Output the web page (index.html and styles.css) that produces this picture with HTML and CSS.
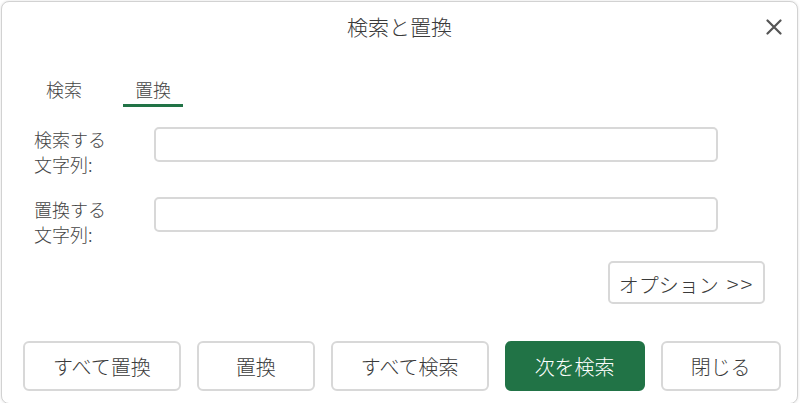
FILE: index.html
```html
<!DOCTYPE html>
<html lang="ja">
<head>
<meta charset="utf-8">
<title>検索と置換</title>
<link rel="stylesheet" href="styles.css">
</head>
<body>
<div class="dialog">
  <div class="header">
    <span class="spacer"></span>
    <h1 class="title">検索と置換</h1>
    <button class="close" aria-label="閉じる">
      <svg width="16" height="16" viewBox="0 0 16 16"><path d="M1.5 1.5 L14.5 14.5 M14.5 1.5 L1.5 14.5" stroke="#555" stroke-width="2.2" stroke-linecap="round" fill="none"/></svg>
    </button>
  </div>
  <div class="tabs">
    <div class="tab">検索</div>
    <div class="tab active">置換</div>
  </div>
  <div class="form">
    <div class="row">
      <label class="label">検索する<br>文字列:</label>
      <input class="field" type="text">
    </div>
    <div class="row">
      <label class="label">置換する<br>文字列:</label>
      <input class="field" type="text">
    </div>
  </div>
  <div class="options-row">
    <button class="options">オプション<span class="arrows">&gt;&gt;</span></button>
  </div>
  <div class="actions">
    <button class="btn">すべて置換</button>
    <button class="btn">置換</button>
    <button class="btn">すべて検索</button>
    <button class="btn primary">次を検索</button>
    <button class="btn">閉じる</button>
  </div>
</div>
</body>
</html>
```
FILE: styles.css
```css
* { box-sizing: border-box; }
html, body { margin: 0; padding: 0; background: #fff; height: 403px; overflow: hidden; }
body {
  font-family: "Noto Sans CJK JP", "Noto Sans", sans-serif;
  font-weight: 300;
  color: #333;
}
.dialog {
  margin: 1px 0 0 1px;
  width: 797px;
  height: 403px;
  border: 1px solid #d2d2d2;
  border-radius: 8px;
  box-shadow: 0 0 3px rgba(0,0,0,0.12);
  background: #fff;
}
.header {
  display: grid;
  grid-template-columns: 1fr auto 1fr;
  align-items: start;
  height: 74px;
  padding-top: 8px;
}
.title {
  margin: 0;
  font-size: 21px;
  font-weight: 300;
  line-height: 32px;
  color: #3a3a3a;
}
.close {
  justify-self: end;
  margin: 9px 15px 0 0;
  padding: 0;
  width: 16px;
  height: 16px;
  border: none;
  background: none;
  display: flex;
}
.tabs {
  display: flex;
  gap: 29px;
  padding-left: 32px;
}
.tab {
  font-size: 18px;
  line-height: 26px;
  padding: 0 12px 2px;
  border-bottom: 3px solid transparent;
  color: #444;
}
.tab.active { border-bottom-color: #217346; }
.form {
  margin-top: 20px;
  padding-left: 32px;
  display: flex;
  flex-direction: column;
  gap: 20px;
}
.row {
  display: flex;
  align-items: flex-start;
}
.label {
  flex: 0 0 120px;
  font-size: 18px;
  line-height: 25px;
  color: #444;
}
.field {
  width: 564px;
  height: 35px;
  border: 2px solid #d8d8d8;
  border-radius: 5px;
  font: inherit;
  outline: none;
  background: #fff;
}
.options-row {
  display: flex;
  justify-content: flex-end;
  margin-top: 14px;
  padding-right: 32px;
}
.options {
  width: 157px;
  height: 43px;
  padding: 0;
  border: 2px solid #d8d8d8;
  border-radius: 5px;
  background: #fff;
  font-family: inherit;
  font-weight: 300;
  font-size: 20px;
  color: #3a3a3a;
  white-space: nowrap;
}
.arrows { margin-left: 8px; letter-spacing: 2px; font-size: 22px; }
.actions {
  display: flex;
  gap: 16px;
  margin-top: 37px;
  padding-left: 21px;
}
.btn {
  height: 50px;
  min-width: 118px;
  padding: 0 28px;
  border: 2px solid #d8d8d8;
  border-radius: 6px;
  background: #fff;
  font-family: inherit;
  font-weight: 300;
  font-size: 20px;
  color: #3a3a3a;
}
.btn.primary {
  background: #217346;
  border-color: #217346;
  color: #fff;
}
```
